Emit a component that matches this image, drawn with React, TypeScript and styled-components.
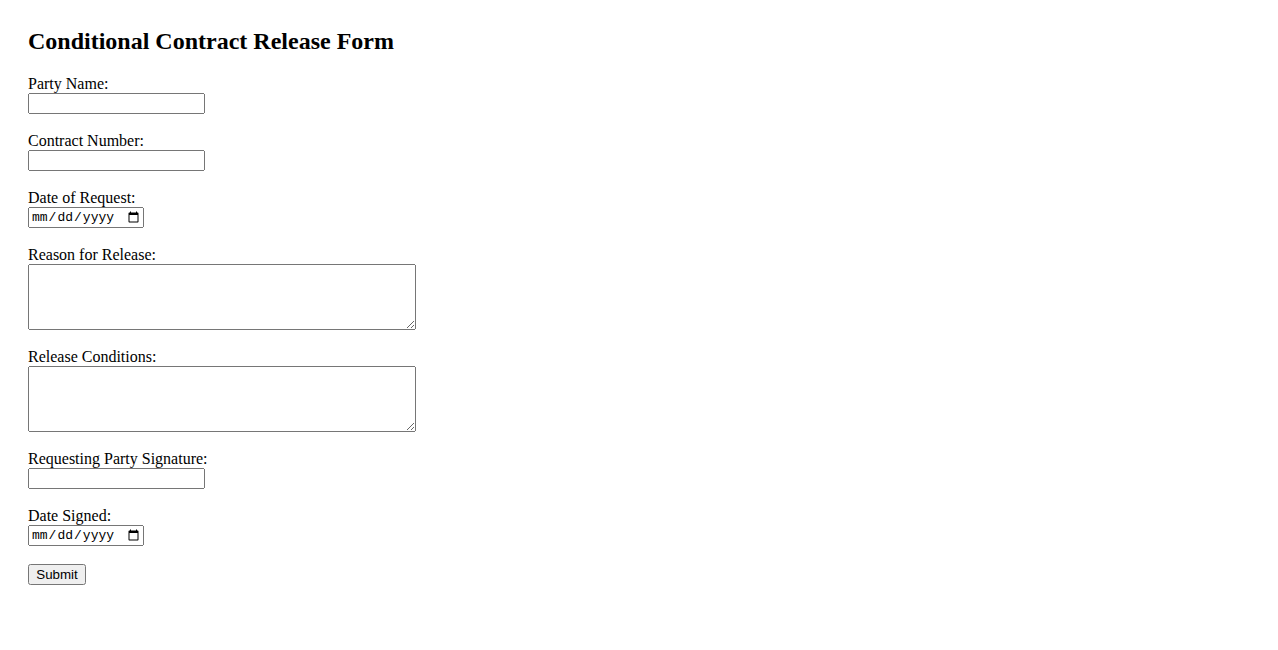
import styled, { createGlobalStyle } from 'styled-components';

const GlobalStyle = createGlobalStyle`
  body {
    margin: 0;
    background: #fff;
    color: #000;
    font-family: 'Liberation Serif', 'Times New Roman', serif;
    font-size: 16px;
  }
`;

const Page = styled.div`
  padding: 8px 28px;
`;

const Title = styled.h2`
  margin: 19.92px 0;
  font-size: 24px;
  font-weight: bold;
  line-height: 27.6px;
`;

const StyledForm = styled.form`
  display: flex;
  flex-direction: column;
  align-items: flex-start;
  gap: 18px;
`;

const Group = styled.div`
  display: flex;
  flex-direction: column;
  align-items: flex-start;
`;

const Label = styled.label`
  display: block;
  height: 18px;
  line-height: 18px;
`;

const TextInput = styled.input`
  box-sizing: border-box;
  width: 177px;
  height: 21px;
  margin: 0;
  font-family: 'Liberation Sans', Arial, sans-serif;
  font-size: 13.33px;
`;

const DateInput = styled.input`
  box-sizing: border-box;
  width: 116px;
  height: 21px;
  margin: 0;
  font-family: 'Liberation Mono', monospace;
  font-size: 13px;
`;

const TextArea = styled.textarea`
  box-sizing: border-box;
  width: 388px;
  height: 66px;
  margin: 0;
  font-family: 'Liberation Mono', monospace;
  font-size: 13.33px;
`;

const SubmitButton = styled.button`
  box-sizing: border-box;
  width: 58px;
  height: 21px;
  margin: 0;
  padding: 1px 6px;
  font-family: 'Liberation Sans', Arial, sans-serif;
  font-size: 13.33px;
`;

type Field = {
  id: string;
  label: string;
  kind: 'text' | 'date' | 'area';
};

const fields: Field[] = [
  { id: 'partyName', label: 'Party Name:', kind: 'text' },
  { id: 'contractNumber', label: 'Contract Number:', kind: 'text' },
  { id: 'requestDate', label: 'Date of Request:', kind: 'date' },
  { id: 'reason', label: 'Reason for Release:', kind: 'area' },
  { id: 'conditions', label: 'Release Conditions:', kind: 'area' },
  { id: 'signature', label: 'Requesting Party Signature:', kind: 'text' },
  { id: 'dateSigned', label: 'Date Signed:', kind: 'date' },
];

export default function App() {
  const items = fields.map((field) => {
    return (
      <Group key={field.id}>
        <Label htmlFor={field.id}>{field.label}</Label>
        {field.kind === 'text' && <TextInput type="text" id={field.id} name={field.id} />}
        {field.kind === 'date' && <DateInput type="date" id={field.id} name={field.id} />}
        {field.kind === 'area' && <TextArea id={field.id} name={field.id} />}
      </Group>
    );
  });
  return (
    <Page>
      <GlobalStyle />
      <Title>Conditional Contract Release Form</Title>
      <StyledForm onSubmit={(e) => e.preventDefault()}>
        {items}
        <SubmitButton type="submit">Submit</SubmitButton>
      </StyledForm>
    </Page>
  );
}
